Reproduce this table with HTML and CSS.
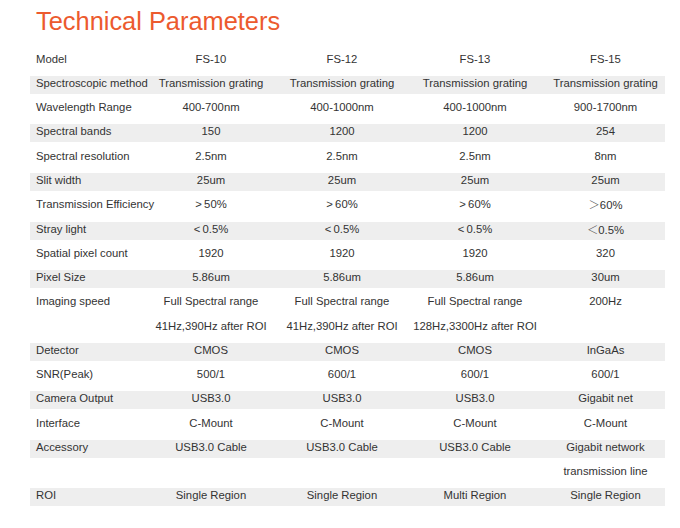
FILE: index.html
```html
<!DOCTYPE html>
<html>
<head>
<meta charset="utf-8">
<link rel="stylesheet" href="styles.css">
</head>
<body>
<div class="page">
  <h1 class="title">Technical Parameters</h1>
  <div class="table">
    <div class="row"><div class="lbl">Model</div><div>FS-10</div><div>FS-12</div><div>FS-13</div><div class="last">FS-15</div></div>
    <div class="row g"><div class="lbl">Spectroscopic method</div><div>Transmission grating</div><div>Transmission grating</div><div>Transmission grating</div><div class="last">Transmission grating</div></div>
    <div class="row"><div class="lbl">Wavelength Range</div><div>400-700nm</div><div>400-1000nm</div><div>400-1000nm</div><div class="last">900-1700nm</div></div>
    <div class="row g"><div class="lbl">Spectral bands</div><div>150</div><div>1200</div><div>1200</div><div class="last">254</div></div>
    <div class="row"><div class="lbl">Spectral resolution</div><div>2.5nm</div><div>2.5nm</div><div>2.5nm</div><div class="last">8nm</div></div>
    <div class="row g"><div class="lbl">Slit width</div><div>25um</div><div>25um</div><div>25um</div><div class="last">25um</div></div>
    <div class="row"><div class="lbl">Transmission Efficiency</div><div>&gt;&#8201;50%</div><div>&gt;&#8201;60%</div><div>&gt;&#8201;60%</div><div class="last"><span class="fw">＞</span>60%</div></div>
    <div class="row g"><div class="lbl">Stray light</div><div>&lt;&#8201;0.5%</div><div>&lt;&#8201;0.5%</div><div>&lt;&#8201;0.5%</div><div class="last"><span class="fw">＜</span>0.5%</div></div>
    <div class="row"><div class="lbl">Spatial pixel count</div><div>1920</div><div>1920</div><div>1920</div><div class="last">320</div></div>
    <div class="row g"><div class="lbl">Pixel Size</div><div>5.86um</div><div>5.86um</div><div>5.86um</div><div class="last">30um</div></div>
    <div class="row"><div class="lbl">Imaging speed</div><div>Full Spectral range</div><div>Full Spectral range</div><div>Full Spectral range</div><div class="last">200Hz</div></div>
    <div class="row"><div class="lbl"></div><div>41Hz,390Hz after ROI</div><div>41Hz,390Hz after ROI</div><div>128Hz,3300Hz after ROI</div><div class="last"></div></div>
    <div class="row g"><div class="lbl">Detector</div><div>CMOS</div><div>CMOS</div><div>CMOS</div><div class="last">InGaAs</div></div>
    <div class="row"><div class="lbl">SNR(Peak)</div><div>500/1</div><div>600/1</div><div>600/1</div><div class="last">600/1</div></div>
    <div class="row g"><div class="lbl">Camera Output</div><div>USB3.0</div><div>USB3.0</div><div>USB3.0</div><div class="last">Gigabit net</div></div>
    <div class="row"><div class="lbl">Interface</div><div>C-Mount</div><div>C-Mount</div><div>C-Mount</div><div class="last">C-Mount</div></div>
    <div class="row g"><div class="lbl">Accessory</div><div>USB3.0 Cable</div><div>USB3.0 Cable</div><div>USB3.0 Cable</div><div class="last">Gigabit network</div></div>
    <div class="row"><div class="lbl"></div><div></div><div></div><div></div><div class="last">transmission line</div></div>
    <div class="row g"><div class="lbl">ROI</div><div>Single Region</div><div>Single Region</div><div>Multi Region</div><div class="last">Single Region</div></div>
  </div>
</div>
</body>
</html>
```

FILE: styles.css
```css
html, body {
  margin: 0;
  padding: 0;
  background: #ffffff;
}

.page {
  width: 680px;
  height: 528px;
  box-sizing: border-box;
  padding: 5.5px 15px 0 30px;
  font-family: "Liberation Sans", Arial, sans-serif;
  color: #333333;
}

.title {
  margin: 0 0 16.2px 6px;
  font-size: 25.4px;
  line-height: 30px;
  font-weight: normal;
  color: #ec5a2e;
}

.table {
  display: flex;
  flex-direction: column;
  gap: 6.28px;
  width: 635px;
}

.row {
  display: grid;
  grid-template-columns: 116px 130px 132px 134px 123px;
  height: 18px;
  font-size: 11.3px;
  line-height: 15px;
  white-space: nowrap;
}

.row.g {
  background: #eeeeee;
}

.row > div {
  text-align: center;
}

.row > .lbl {
  text-align: left;
  padding-left: 6px;
}

.row > .last {
  padding-left: 4px;
}

.fw {
  font-family: "Noto Sans CJK SC", sans-serif;
  font-weight: 300;
  color: #555555;
}
```
